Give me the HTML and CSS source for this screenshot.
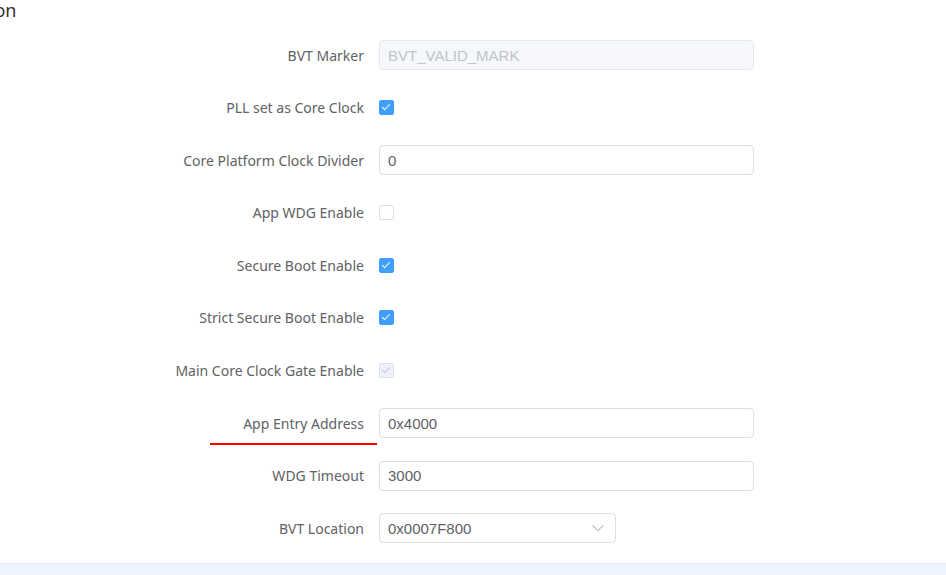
FILE: index.html
```html
<!DOCTYPE html>
<html lang="en">
<head>
    <meta charset="UTF-8">
    <title>Boot Configuration</title>
    <link rel="stylesheet" href="styles.css">
</head>
<body>
    <div class="page-title">Boot Configuration</div>

    <form class="cfg-form">
        <div class="form-item">
            <label class="form-label">BVT Marker</label>
            <div class="form-control">
                <input class="text-input wide" type="text" value="BVT_VALID_MARK" disabled>
            </div>
        </div>
        <div class="form-item">
            <label class="form-label">PLL set as Core Clock</label>
            <div class="form-control"><span class="check checked"></span></div>
        </div>
        <div class="form-item">
            <label class="form-label">Core Platform Clock Divider</label>
            <div class="form-control">
                <input class="text-input wide" type="text" value="0">
            </div>
        </div>
        <div class="form-item">
            <label class="form-label">App WDG Enable</label>
            <div class="form-control"><span class="check"></span></div>
        </div>
        <div class="form-item">
            <label class="form-label">Secure Boot Enable</label>
            <div class="form-control"><span class="check checked"></span></div>
        </div>
        <div class="form-item">
            <label class="form-label">Strict Secure Boot Enable</label>
            <div class="form-control"><span class="check checked"></span></div>
        </div>
        <div class="form-item">
            <label class="form-label">Main Core Clock Gate Enable</label>
            <div class="form-control"><span class="check checked disabled"></span></div>
        </div>
        <div class="form-item">
            <label class="form-label marked">App Entry Address</label>
            <div class="form-control">
                <input class="text-input wide" type="text" value="0x4000">
            </div>
        </div>
        <div class="form-item">
            <label class="form-label">WDG Timeout</label>
            <div class="form-control">
                <input class="text-input wide" type="text" value="3000">
            </div>
        </div>
        <div class="form-item">
            <label class="form-label">BVT Location</label>
            <div class="form-control">
                <div class="select">
                    <span>0x0007F800</span>
                    <svg class="select-arrow" width="14" height="14" viewBox="0 0 14 14">
                        <path d="M1.5 4.5 L7 9.5 L12.5 4.5" fill="none" stroke="#c0c4cc" stroke-width="1.2"/>
                    </svg>
                </div>
            </div>
        </div>
    </form>

    <div class="footer-bar"></div>
</body>
</html>
```

FILE: styles.css
```css
body {
    margin: 0;
    height: 575px;
    overflow: hidden;
    background-color: #fff;
    font-family: "Noto Sans", "Liberation Sans", sans-serif;
    color: #606266;
    position: relative;
}
.page-title {
    font-size: 18px;
    color: #303133;
    line-height: 20px;
    margin-left: -145px;
    white-space: nowrap;
}
.cfg-form {
    margin-top: 19.5px;
    display: flex;
    flex-direction: column;
    gap: 22.6px;
}
.form-item {
    display: grid;
    grid-template-columns: 364px 1fr;
    column-gap: 15px;
    align-items: center;
    height: 30px;
}
.form-label {
    text-align: right;
    font-size: 14px;
    line-height: 30px;
    padding-top: 1px;
    white-space: nowrap;
}
.form-label.marked {
    position: relative;
}
.form-label.marked::after {
    content: "";
    position: absolute;
    left: 210px;
    right: -13px;
    bottom: -6px;
    height: 2px;
    background-color: #f00;
}
.form-control {
    display: flex;
    align-items: center;
}
.text-input {
    box-sizing: border-box;
    height: 30px;
    border: 1px solid #dcdfe6;
    border-radius: 4px;
    padding: 0 8px;
    font-family: "Liberation Sans", sans-serif;
    font-size: 15px;
    color: #606266;
    background-color: #fff;
    outline: none;
}
.text-input.wide {
    width: 375px;
}
.text-input:disabled {
    background-color: #f5f7fa;
    border-color: #e4e7ed;
    color: #c0c4cc;
}
.check {
    box-sizing: border-box;
    width: 15px;
    height: 15px;
    border: 1px solid #dcdfe6;
    border-radius: 2px;
    background-color: #fff;
    position: relative;
}
.check.checked {
    background-color: #409eff;
    border-color: #409eff;
}
.check.checked::after {
    content: "";
    position: absolute;
    left: 4px;
    top: 1px;
    width: 3px;
    height: 7px;
    border: 1px solid #fff;
    border-left: 0;
    border-top: 0;
    transform: rotate(45deg);
}
.check.disabled {
    background-color: #edf2fc;
    border-color: #dcdfe6;
}
.check.disabled::after {
    border-color: #c0c4cc;
}
.select {
    box-sizing: border-box;
    width: 237px;
    height: 30px;
    border: 1px solid #dcdfe6;
    border-radius: 4px;
    padding: 0 8px;
    display: flex;
    align-items: center;
    justify-content: space-between;
    font-family: "Liberation Sans", sans-serif;
    font-size: 15px;
}
.select-arrow {
    margin-right: 2px;
}
.footer-bar {
    position: absolute;
    left: 0;
    right: 0;
    top: 563px;
    height: 12px;
    background-color: #ecf5ff;
    border-top: 1px solid #e4e7ed;
}
```
